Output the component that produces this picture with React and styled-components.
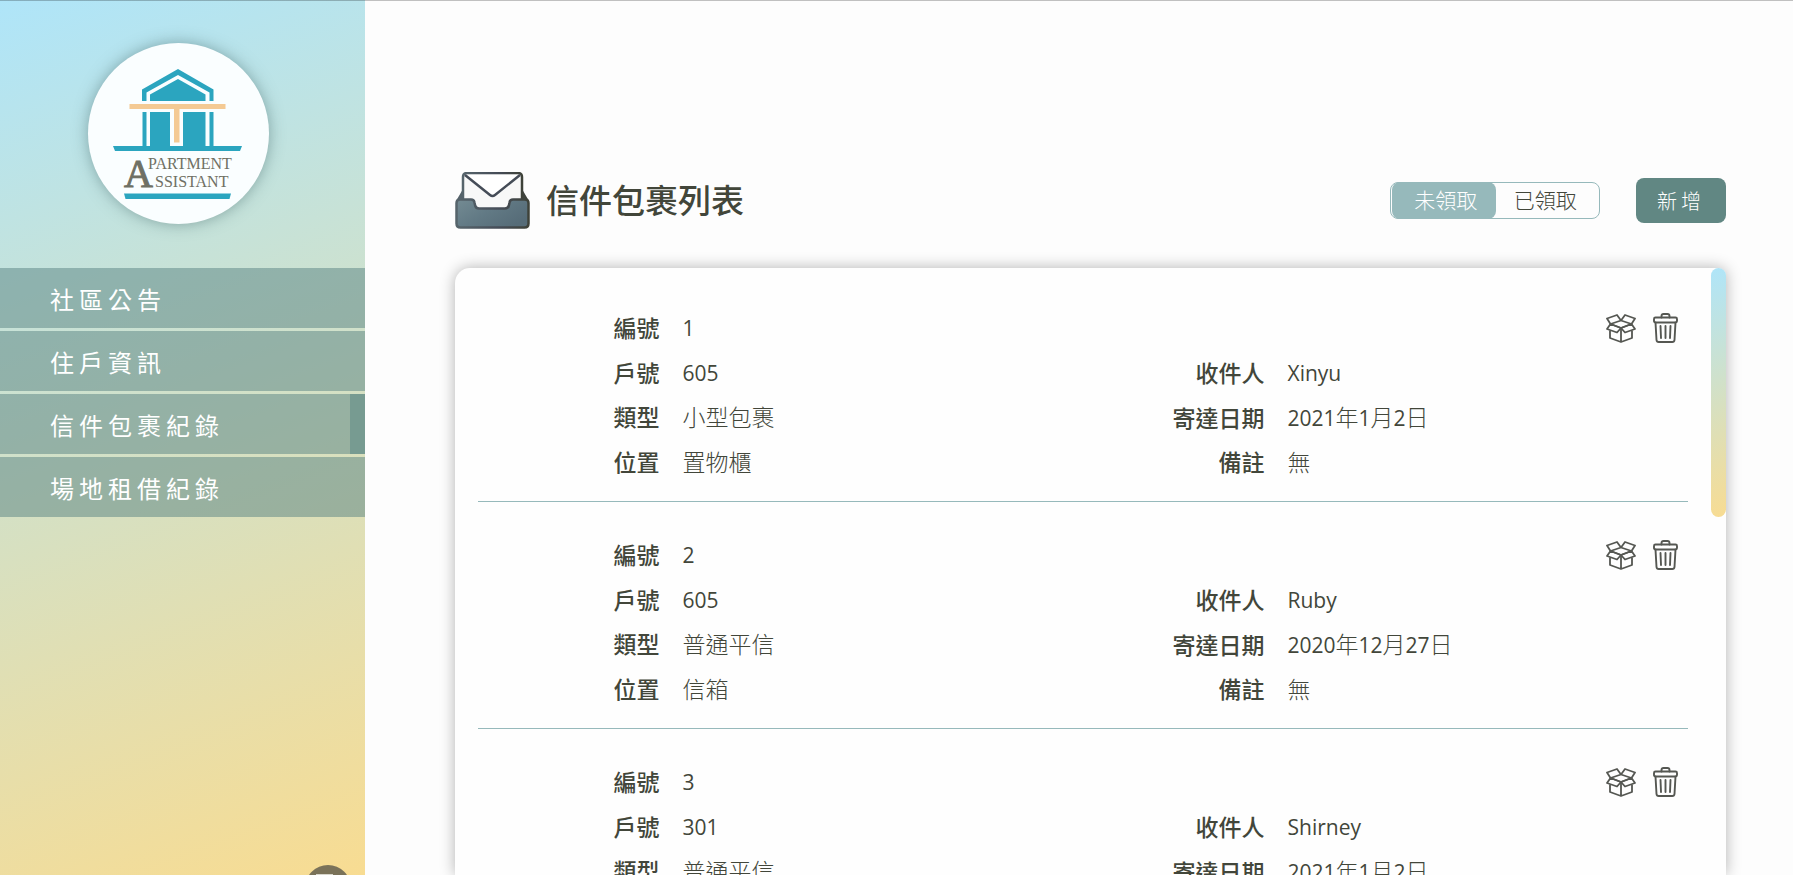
import React, { useState } from "react";
import styled, { createGlobalStyle, ThemeProvider } from "styled-components";

const theme = {
  text: "#42463a",
  teal: "#96b9bb",
  tealDark: "#618783",
  page: "#fdfdfd",
  gradient: "linear-gradient(160deg, #afe5f9 0%, #f8dc92 100%)",
};

const GlobalStyle = createGlobalStyle`
  *, *::before, *::after { box-sizing: border-box; }
  body {
    margin: 0;
    background: ${theme.page};
    color: ${theme.text};
    font-family: "Open Sans", "Noto Sans CJK TC", sans-serif;
  }
  button { font-family: inherit; cursor: pointer; border: 0; padding: 0; background: none; }
`;

const Page = styled.div`
  position: relative;
  display: flex;
  height: 100vh;
  overflow: hidden;

  &::after {
    content: "";
    position: absolute;
    inset: 0 0 auto;
    height: 1px;
    background: rgba(0, 0, 0, 0.24);
  }
`;

const Sidebar = styled.aside`
  position: relative;
  flex: 0 0 365px;
  display: flex;
  flex-direction: column;
  background: ${(p) => p.theme.gradient};
`;

const LogoDisc = styled.a`
  display: block;
  width: 181px;
  height: 181px;
  margin: 43px 0 44px 88px;
  border-radius: 50%;
  background: #fafeff;
  box-shadow: 0 0 15px rgba(66, 100, 100, 0.5);
`;

const LogoText = styled.text`
  font-family: "Liberation Serif", serif;
  font-size: ${(p) => (p.$initial ? 40 : 16)}px;
  fill: #6f7064;
  stroke: #6f7064;
  stroke-width: ${(p) => (p.$initial ? 1 : 0)};
`;

const Nav = styled.nav`
  display: flex;
  flex-direction: column;
  gap: 3px;
`;

const NavLink = styled.a`
  display: flex;
  align-items: center;
  height: 60px;
  padding-left: 50px;
  background: rgba(88, 130, 130, 0.5);
  border-right: ${(p) => (p.$active ? "15px solid #779b91" : "0")};
  background-clip: padding-box;
  color: #fff;
  font-size: 24px;
  font-weight: 400;
  letter-spacing: 5px;
  text-decoration: none;
`;

const CornerButton = styled.button`
  position: absolute;
  right: 14px;
  bottom: -36px;
  display: grid;
  place-items: center;
  width: 46px;
  height: 46px;
  border-radius: 50%;
  background: #7a7259;
`;

const Main = styled.main`
  flex: 1;
  min-width: 0;
  display: flex;
  flex-direction: column;
  padding: 172px 67px 0 90px;
`;

const Header = styled.header`
  display: flex;
  align-items: center;
  height: 57px;
  margin-bottom: 39px;
`;

const Title = styled.h1`
  flex: 1;
  margin: 0 0 0 16px;
  font-size: 33px;
  line-height: 48px;
  font-weight: 500;
`;

const Toggle = styled.div`
  display: flex;
  width: 210px;
  height: 37px;
  margin-right: 36px;
  padding-left: 1px;
  border: 1px solid ${(p) => p.theme.teal};
  border-radius: 8px;
`;

const ToggleButton = styled.button`
  width: 50%;
  margin: -1px 0;
  border-radius: 8px;
  font-size: 21px;
  font-weight: 300;
  line-height: 35px;
  color: ${(p) => (p.$on ? "#fff" : p.theme.text)};
  background: ${(p) => (p.$on ? p.theme.teal : "transparent")};

  &:first-child { padding-left: 4px; }
  &:last-child { padding-right: 4px; }
`;

const AddButton = styled.button`
  width: 90px;
  height: 45px;
  border-radius: 8px;
  background: ${(p) => p.theme.tealDark};
  color: #fff;
  font-size: 20px;
  font-weight: 300;
  letter-spacing: 4px;
`;

const Panel = styled.section`
  flex: 1;
  min-height: 0;
  display: flex;
  border-radius: 15px 8px 0 0;
  background: #fefefe;
  box-shadow: 0 0 15px rgba(0, 0, 0, 0.3);
`;

const List = styled.ul`
  flex: 1;
  margin: 0;
  padding: 7px 23px 0;
  list-style: none;
  overflow: hidden auto;
  scrollbar-width: none;
`;

const Track = styled.div`
  width: 15px;
`;

const Thumb = styled.div`
  height: 41%;
  border-radius: 8px;
  background: ${(p) => p.theme.gradient};
`;

const Record = styled.li`
  position: relative;
  padding: 30px 0 16px;
  border-bottom: 1px solid ${(p) => p.theme.teal};
`;

const Fields = styled.dl`
  display: grid;
  grid-template-columns: 1fr 1fr;
  grid-auto-rows: 45px;
  margin: 0;
`;

const Field = styled.div`
  grid-column: ${(p) => (p.$wide ? "1 / -1" : "auto")};
  display: grid;
  grid-template-columns: ${(p) => (p.$wide ? "15%" : "30%")} 1fr;
  column-gap: 23px;
  align-items: center;
  line-height: 45px;
`;

const Label = styled.dt`
  font-size: 23px;
  font-weight: 500;
  text-align: right;
`;

const Value = styled.dd`
  margin: 0;
  font-size: 23px;
  font-weight: 300;
`;

const Latin = styled.span`
  font-size: 21px;
  font-weight: 400;
`;

const Actions = styled.div`
  position: absolute;
  top: 38px;
  right: 10px;
  display: flex;
  gap: 17px;
`;

const IconButton = styled.button`
  display: flex;
  align-items: center;
  height: 30px;
`;

function Logo() {
  return (
    <svg width="180" height="180" viewBox="0 0 180 180" role="img" aria-label="Apartment Assistant">
      <g fill="#2ba5bf">
        <path d="M54 58V46.500L90 26l35.500 20.500V58h-4V49.500L90 32 58.500 49.500V58z" />
        <path d="M62 58V51.500L90 36l27.500 15.500V58z" />
        <path d="M54.500 69h4v34h-4zM62 69h20v34H62zM95 69h22.500v34H95zM121.500 69h4v34h-4z" />
        <path d="M25 103h129l-2 5H27z" />
        <path d="M36 150.500h107l-1.500 5.500H37.500z" />
      </g>
      <path d="M41.500 61h96v5H91.500v33.500H86V66H41.500z" fill="#f4ca94" />
      <LogoText $initial x="36" y="144">A</LogoText>
      <LogoText x="60" y="126">PARTMENT</LogoText>
      <LogoText x="67" y="144">SSISTANT</LogoText>
    </svg>
  );
}

function InboxIcon() {
  return (
    <svg width="75" height="57" viewBox="0 0 75 57" aria-hidden="true">
      <defs>
        <linearGradient id="tray" x1="0" y1="0" x2="1" y2="0.6">
          <stop offset="0" stopColor="#748b93" />
          <stop offset="0.5" stopColor="#627a85" />
          <stop offset="1" stopColor="#566c78" />
        </linearGradient>
        <linearGradient id="edge" x1="0" y1="0" x2="1" y2="0">
          <stop offset="0" stopColor="#56646b" />
          <stop offset="0.6" stopColor="#454c57" />
          <stop offset="1" stopColor="#3e4239" />
        </linearGradient>
      </defs>
      <path d="M8 17L1 29h10zM67 17l7 12H64z" fill="url(#edge)" />
      <path d="M8 40V5q0-4 4-4h51q4 0 4 4v35z" fill="#f8f8f8" stroke="url(#edge)" strokeWidth="2.500" />
      <path d="M11 3h53L38 24z" fill="#fff" />
      <path d="M10 3l25 20q2.500 2 5 0L65 3" fill="none" stroke="#454c57" strokeWidth="2.500" />
      <path
        d="M5 27.500h11q3 0 3.500 3l.5 2.500q.5 3.500 4 3.500h26q3.500 0 4-3.500l.5-2.500q.5-3 3.500-3h12q3.500 0 3.500 3.500v20.500q0 4-4 4h-64q-4 0-4-4V31q0-3.500 3.500-3.500z"
        fill="url(#tray)"
        stroke="url(#edge)"
        strokeWidth="2.500"
      />
    </svg>
  );
}

function BoxIcon() {
  return (
    <svg width="30" height="29" viewBox="0 0 30 29" fill="none" stroke="#555752" strokeWidth="1.800" strokeLinejoin="round" aria-hidden="true">
      <path d="M4.500 10L1 4.500l10-3.500 4 5.500zM25.500 10L29 4.500 19 1l-4 5.500z" />
      <path d="M4.500 10L15 14l10.500-4" />
      <path d="M4.500 10L1 15l10 3.500 4-4.500zM25.500 10l3.500 5-10 3.500-4-4.500z" />
      <path d="M4 16.500V24l11 4 11-4v-7.500M15 14v14" />
    </svg>
  );
}

function TrashIcon() {
  return (
    <svg width="25" height="30" viewBox="0 0 25 30" fill="none" stroke="#555752" strokeWidth="1.900" strokeLinejoin="round" strokeLinecap="round" aria-hidden="true">
      <path d="M8.500 4.500V3q0-2 2-2h4q2 0 2 2v1.500" />
      <rect x="1" y="4.500" width="23" height="5" rx="1.500" />
      <path d="M2.500 9.500L3.500 27q.2 2 2.200 2h13.600q2 0 2.200-2l1-17.500" />
      <path d="M7.500 13l.5 12M12.500 13v12M17.500 13l-.5 12" />
    </svg>
  );
}

const NAV = ["社區公告", "住戶資訊", "信件包裹紀錄", "場地租借紀錄"];

const RECORDS = [
  { id: "1", unit: "605", to: "Xinyu", type: "小型包裹", date: "2021年1月2日", place: "置物櫃", note: "無" },
  { id: "2", unit: "605", to: "Ruby", type: "普通平信", date: "2020年12月27日", place: "信箱", note: "無" },
  { id: "3", unit: "301", to: "Shirney", type: "普通平信", date: "2021年1月2日", place: "信箱", note: "無" },
];

function Item({ label, value, wide }) {
  return (
    <Field $wide={wide}>
      <Label>{label}</Label>
      <Value>
        {value.split(/([\w]+)/).filter(Boolean).map((run, i) =>
          /^\w/.test(run) ? <Latin key={i}>{run}</Latin> : run
        )}
      </Value>
    </Field>
  );
}

export default function App() {
  const [tab, setTab] = useState(0);
  return (
    <ThemeProvider theme={theme}>
      <GlobalStyle />
      <Page>
        <Sidebar>
          <LogoDisc href="#home"><Logo /></LogoDisc>
          <Nav>
            {NAV.map((name, i) => (
              <NavLink key={name} href={`#${i}`} $active={i === 2}>{name}</NavLink>
            ))}
          </Nav>
          <CornerButton aria-label="登出">
            <svg width="24" height="28" viewBox="0 0 24 28" fill="none" stroke="#d8d6cc" strokeWidth="2" aria-hidden="true">
              <path d="M16 8V1H1v26h15v-7M8 14h14M18 10l4 4-4 4" />
            </svg>
          </CornerButton>
        </Sidebar>
        <Main>
          <Header>
            <InboxIcon />
            <Title>信件包裹列表</Title>
            <Toggle role="group" aria-label="領取狀態">
              {["未領取", "已領取"].map((name, i) => (
                <ToggleButton key={name} $on={tab === i} aria-pressed={tab === i} onClick={() => setTab(i)}>
                  {name}
                </ToggleButton>
              ))}
            </Toggle>
            <AddButton>新增</AddButton>
          </Header>
          <Panel>
            <List>
              {RECORDS.map((r) => (
                <Record key={r.id}>
                  <Fields>
                    <Item wide label="編號" value={r.id} />
                    <Item label="戶號" value={r.unit} />
                    <Item label="收件人" value={r.to} />
                    <Item label="類型" value={r.type} />
                    <Item label="寄達日期" value={r.date} />
                    <Item label="位置" value={r.place} />
                    <Item label="備註" value={r.note} />
                  </Fields>
                  <Actions>
                    <IconButton aria-label="領取"><BoxIcon /></IconButton>
                    <IconButton aria-label="刪除"><TrashIcon /></IconButton>
                  </Actions>
                </Record>
              ))}
            </List>
            <Track><Thumb /></Track>
          </Panel>
        </Main>
      </Page>
    </ThemeProvider>
  );
}
